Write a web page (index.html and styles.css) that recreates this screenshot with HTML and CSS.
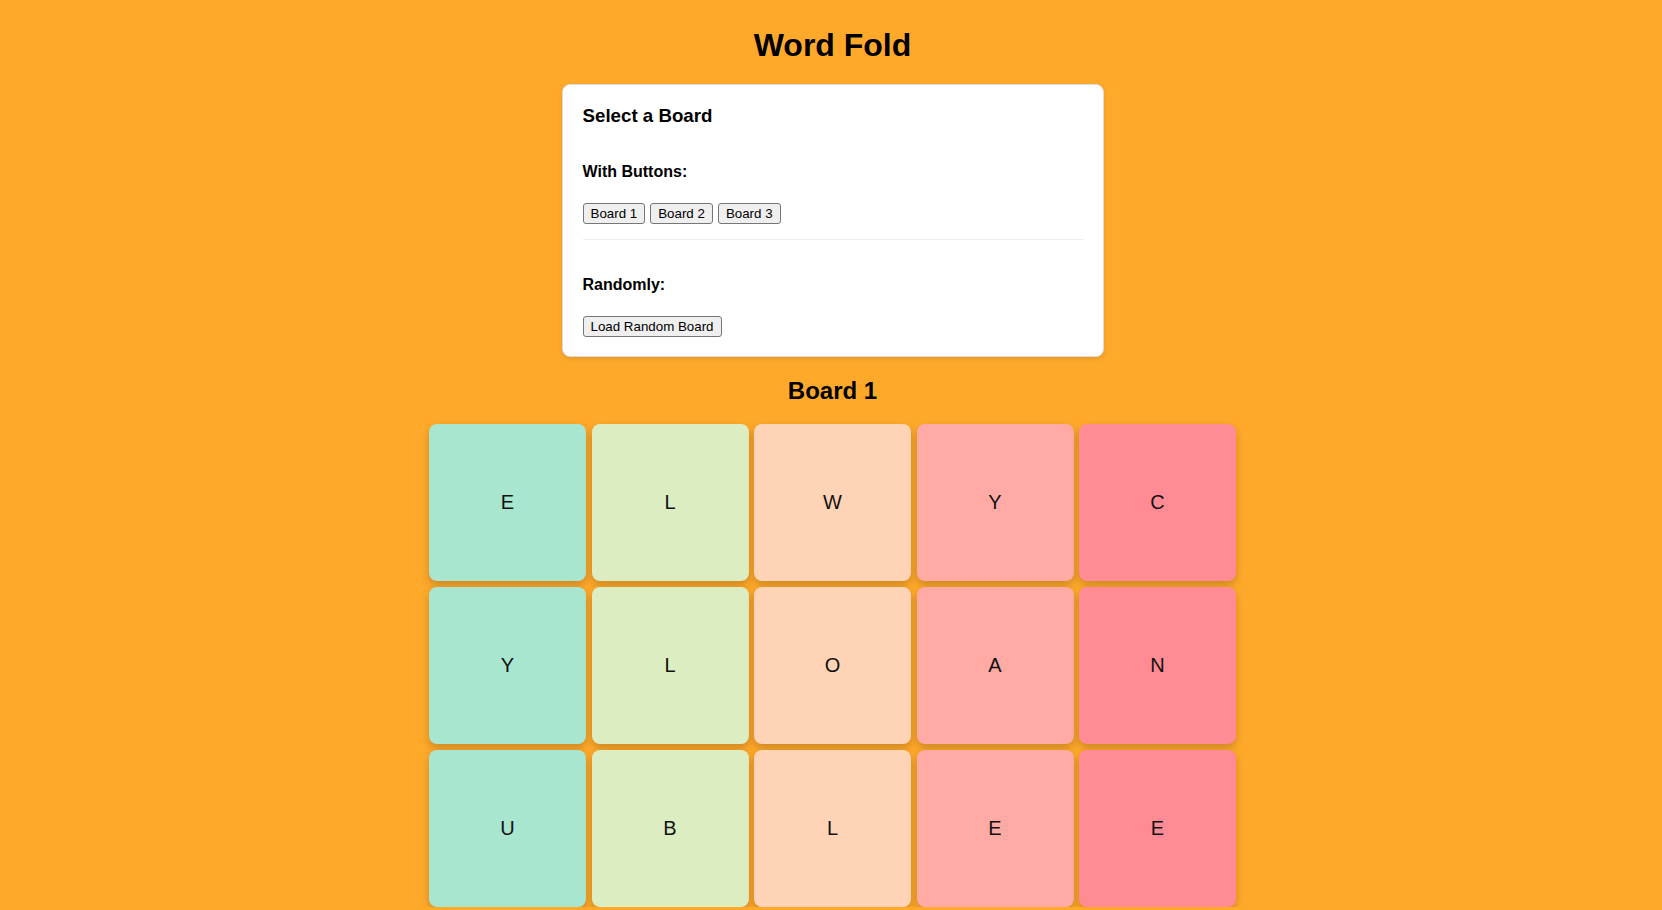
FILE: index.html
```html
<!DOCTYPE html>
<html lang="en">
<head>
<meta charset="utf-8">
<title>Word Fold</title>
<link rel="stylesheet" href="styles.css">
</head>
<body>
<main class="app">
  <h1 class="app-title">Word Fold</h1>

  <section class="panel">
    <h3 class="panel-title">Select a Board</h3>

    <div class="panel-section">
      <h4 class="section-label">With Buttons:</h4>
      <div class="button-row">
        <button class="btn" type="button">Board 1</button>
        <button class="btn" type="button">Board 2</button>
        <button class="btn" type="button">Board 3</button>
      </div>
    </div>

    <hr class="divider">

    <div class="panel-section">
      <h4 class="section-label">Randomly:</h4>
      <div class="button-row">
        <button class="btn" type="button">Load Random Board</button>
      </div>
    </div>
  </section>

  <h2 class="board-title">Board 1</h2>

  <div class="board">
    <div class="tile tile-c1">E</div>
    <div class="tile tile-c2">L</div>
    <div class="tile tile-c3">W</div>
    <div class="tile tile-c4">Y</div>
    <div class="tile tile-c5">C</div>

    <div class="tile tile-c1">Y</div>
    <div class="tile tile-c2">L</div>
    <div class="tile tile-c3">O</div>
    <div class="tile tile-c4">A</div>
    <div class="tile tile-c5">N</div>

    <div class="tile tile-c1">U</div>
    <div class="tile tile-c2">B</div>
    <div class="tile tile-c3">L</div>
    <div class="tile tile-c4">E</div>
    <div class="tile tile-c5">E</div>
  </div>
</main>
</body>
</html>
```

FILE: styles.css
```css
html, body {
  margin: 0;
  padding: 0;
}

body {
  background: #ffa92a;
  font-family: "Liberation Sans", Arial, sans-serif;
  color: #000;
}

.app {
  display: flex;
  flex-direction: column;
  align-items: center;
  padding-left: 3px;
}

.app-title {
  font-size: 32px;
  font-weight: bold;
  line-height: normal;
  margin: 26.5px 0 20.5px;
}

.panel {
  width: 500px;
  padding: 20px 20px 18.5px;
  background: #fff;
  border: 1px solid #dcdcdc;
  border-radius: 8px;
  box-shadow: 0 2px 4px rgba(0, 0, 0, 0.1);
}

.panel-title {
  font-size: 18.72px;
  font-weight: bold;
  line-height: normal;
  margin: 0 0 35.5px;
}

.section-label {
  font-size: 16px;
  font-weight: bold;
  line-height: normal;
  margin: 0 0 22px;
}

.button-row {
  display: flex;
  gap: 5px;
}

.btn {
  font-family: "Liberation Sans", Arial, sans-serif;
  font-size: 13.333px;
  line-height: normal;
  height: 21px;
  padding: 1px 7px;
  background: #efefef;
  color: #000;
  border: 1px solid #767676;
  border-radius: 3px;
  box-sizing: border-box;
}

.divider {
  border: 0;
  border-top: 1px solid #eeeeee;
  height: 0;
  margin: 15.5px 0 36px;
}

.board-title {
  font-size: 24px;
  font-weight: bold;
  line-height: normal;
  margin: 20.5px 0 18.5px;
}

.board {
  display: grid;
  grid-template-columns: repeat(5, 157px);
  grid-auto-rows: 157px;
  column-gap: 5.5px;
  row-gap: 6px;
}

.tile {
  display: flex;
  align-items: center;
  justify-content: center;
  border-radius: 8px;
  font-size: 20px;
  color: #111;
  box-shadow: 0 4px 8px rgba(0, 0, 0, 0.2);
}

.tile-c1 { background: #a8e6cf; }
.tile-c2 { background: #dcedc1; }
.tile-c3 { background: #ffd3b6; }
.tile-c4 { background: #ffaaa5; }
.tile-c5 { background: #ff8b94; }
```
